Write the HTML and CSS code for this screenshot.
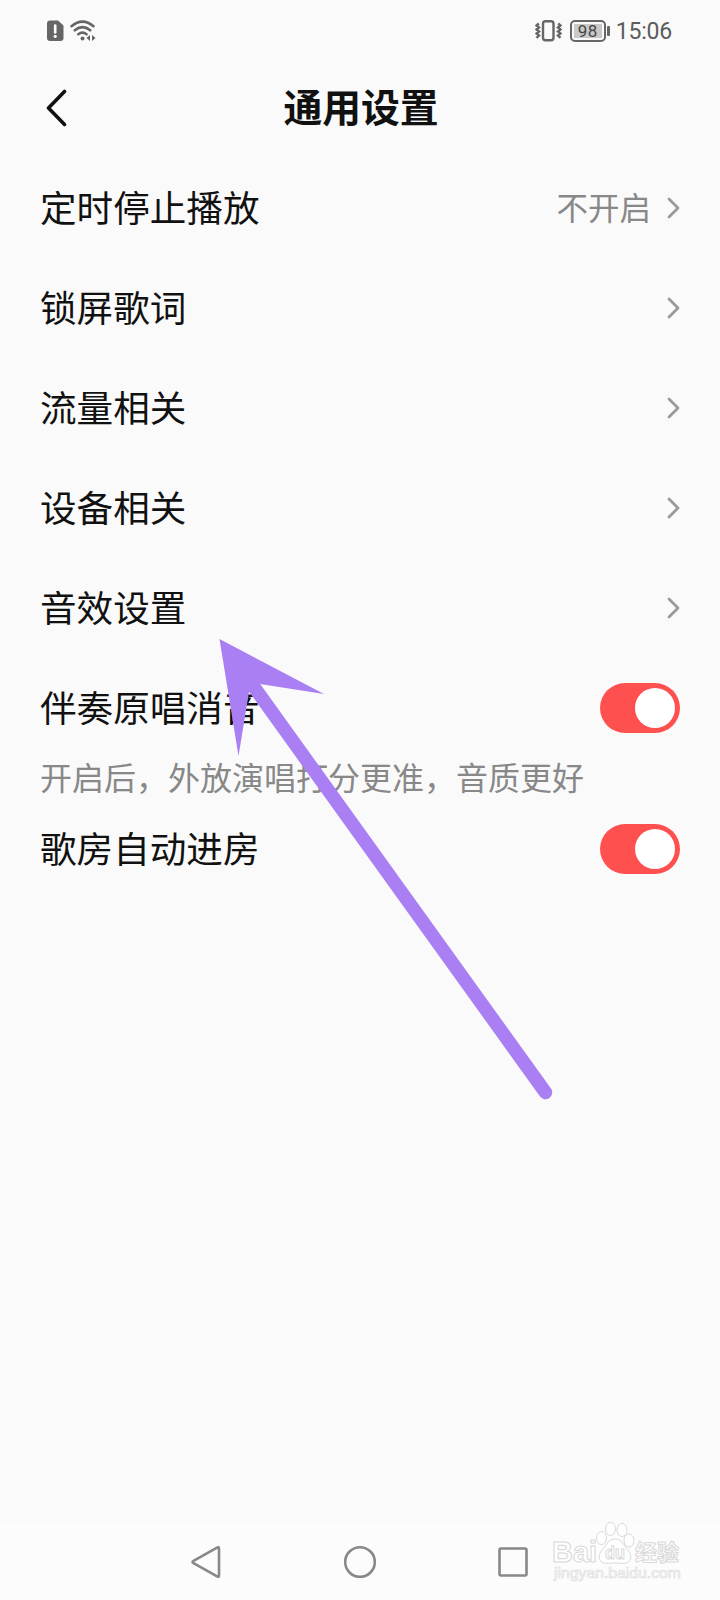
FILE: index.html
```
<!DOCTYPE html>
<html lang="zh-CN">
<head>
    <meta charset="UTF-8">
    <meta name="viewport" content="width=device-width, initial-scale=1.0">
    <title>通用设置</title>
    <link rel="stylesheet" href="styles.css">
</head>
<body>
    <div class="screen">
        <div class="status-bar">
            <div class="status-group">
                <svg width="17" height="22" viewBox="0 0 17 22">
                    <path d="M3 0.5h8l5.500 5v12.500a3 3 0 0 1-3 3H3a3 3 0 0 1-3-3V3.500a3 3 0 0 1 3-3z" fill="#666"/>
                    <path d="M8.200 5.500v7" stroke="#fff" stroke-width="2.600" stroke-linecap="round"/>
                    <circle cx="8.200" cy="16.300" r="1.600" fill="#fff"/>
                </svg>
                <svg class="wifi" width="26" height="22" viewBox="0 0 26 22" fill="none" stroke="#666" stroke-width="2.600" stroke-linecap="round">
                    <path d="M1.500 6.200Q12.500-3 23.500 6.200M4.800 10.300Q12.500 4 20.200 10.300M8.300 14.200Q12.500 11 16.500 14.200"/>
                    <circle cx="12.500" cy="18.500" r="2" fill="#666" stroke="none"/>
                    <path d="M20 15v6l-3.500-3zM22 15v6l3.500-3z" fill="#666" stroke="none"/>
                </svg>
            </div>
            <div class="status-group">
                <svg width="27" height="22" viewBox="0 0 27 22" fill="none" stroke="#666" stroke-width="2.400">
                    <rect x="8" y="1.300" width="10.500" height="19" rx="2.500"/>
                    <path d="M3.800 3.500L1.500 5.500 4 7.500 1.500 9.500 4 11.500 1.500 13.500 4 15.500 1.500 17.800M23.200 3.500L25.500 5.500 23 7.500 25.500 9.500 23 11.500 25.500 13.500 23 15.500 25.500 17.800"/>
                </svg>
                <div class="battery"><span class="battery-level">98</span></div>
                <span class="clock">15:06</span>
            </div>
        </div>

        <div class="header">
            <svg class="back" width="22" height="38" viewBox="0 0 22 38" fill="none" stroke="#111" stroke-width="3.600" stroke-linecap="round" stroke-linejoin="round">
                <path d="M18.500 2.500L2.500 19l16 16.500"/>
            </svg>
            <h1>通用设置</h1>
        </div>

        <div class="list">
            <div class="row">
                <span class="label">定时停止播放</span>
                <span class="value">不开启</span>
                <svg class="chevron" viewBox="0 0 14 22"><path d="M2 2l9 9-9 9"/></svg>
            </div>
            <div class="row">
                <span class="label">锁屏歌词</span>
                <svg class="chevron" viewBox="0 0 14 22"><path d="M2 2l9 9-9 9"/></svg>
            </div>
            <div class="row">
                <span class="label">流量相关</span>
                <svg class="chevron" viewBox="0 0 14 22"><path d="M2 2l9 9-9 9"/></svg>
            </div>
            <div class="row">
                <span class="label">设备相关</span>
                <svg class="chevron" viewBox="0 0 14 22"><path d="M2 2l9 9-9 9"/></svg>
            </div>
            <div class="row">
                <span class="label">音效设置</span>
                <svg class="chevron" viewBox="0 0 14 22"><path d="M2 2l9 9-9 9"/></svg>
            </div>
            <div class="row">
                <span class="label">伴奏原唱消音</span>
                <div class="switch"></div>
            </div>
            <p class="hint">开启后，外放演唱打分更准，音质更好</p>
            <div class="row">
                <span class="label">歌房自动进房</span>
                <div class="switch"></div>
            </div>
        </div>

        <div class="nav-bar">
            <svg width="32" height="34" viewBox="0 0 32 34"><path d="M27.500 2.500Q29 1.500 29 3.500v27q0 2-1.500 1L3.500 18.200q-2-1.200 0-2.400z"/></svg>
            <svg width="34" height="34" viewBox="0 0 34 34"><circle cx="18" cy="17" r="14.800"/></svg>
            <svg width="34" height="34" viewBox="0 0 34 34"><rect x="3.500" y="3.500" width="27" height="27" rx="1.500"/></svg>
        </div>

        <!-- pointer arrow -->
        <svg class="arrow" width="350" height="480" viewBox="0 0 350 480">
            <path d="M9.500 9L114 64 50 54 39 62 28.500 126z"/>
            <path class="shaft" d="M44 57L335.500 462.500"/>
        </svg>

        <svg class="watermark" width="140" height="70" viewBox="0 0 140 70">
            <g class="outline">
                <text x="2" y="42" font-size="29" textLength="45" lengthAdjust="spacingAndGlyphs">Bai</text>
                <ellipse cx="51.500" cy="18" rx="5" ry="6.500"/>
                <ellipse cx="60.500" cy="9" rx="5" ry="6.500"/>
                <ellipse cx="72" cy="10" rx="5" ry="6.500"/>
                <ellipse cx="79" cy="20.500" rx="5" ry="6.500"/>
                <path d="M65 19c5 0 8 4 11 9 4 4 6 8 4 12-3 5-9 3-15 3s-12 2-15-3c-2-4 0-8 4-12 3-5 6-9 11-9z"/>
                <text x="55" y="39" font-size="19" textLength="20" lengthAdjust="spacingAndGlyphs">du</text>
                <text class="cjk" x="85" y="40" font-size="22">经验</text>
            </g>
            <text class="url" x="4" y="58" font-size="14" textLength="127" lengthAdjust="spacingAndGlyphs">jingyan.baidu.com</text>
        </svg>
    </div>
</body>
</html>
```
FILE: styles.css
```
* {
    box-sizing: border-box;
}
body {
    margin: 0;
    background-color: #fafafa;
    font-family: "Noto Sans CJK SC", sans-serif;
    color: #111;
}
.screen {
    position: relative;
    display: flex;
    flex-direction: column;
    width: 720px;
    height: 1600px;
    overflow: hidden;
}
.status-bar {
    display: flex;
    justify-content: space-between;
    align-items: center;
    height: 61px;
    padding: 0 48px 0 47px;
}
.status-group {
    display: flex;
    align-items: center;
}
.wifi {
    margin-left: 6px;
}
.battery {
    position: relative;
    width: 36px;
    height: 22px;
    margin: 0 10px 0 8px;
    padding: 2px;
    border: 2px solid #666;
    border-radius: 5px;
}
/* battery terminal */
.battery::after {
    content: "";
    position: absolute;
    top: 4px;
    right: -6px;
    width: 3px;
    height: 10px;
    border-radius: 1px;
    background-color: #666;
}
.battery-level {
    display: block;
    width: 28px;
    height: 14px;
    background-color: #c9c9c9;
    color: #444;
    font: 17px/14px Roboto, sans-serif;
    letter-spacing: 0.4px;
    text-align: center;
}
.clock {
    font: 23px/28px Roboto, sans-serif;
    letter-spacing: -0.2px;
    padding-top: 2px;
    color: #5c5c5c;
}
.header {
    display: grid;
    grid-template-columns: 121px 1fr 119px;
    align-items: center;
    height: 97px;
    padding-bottom: 3px;
}
.back {
    margin-left: 46px;
}
h1 {
    margin: 0;
    padding-bottom: 6px;
    font-size: 38.8px;
    line-height: 60px;
    font-weight: 700;
    text-align: center;
}
.list {
    flex: 1;
    padding: 0 40px;
}
.row {
    display: flex;
    align-items: center;
    height: 100px;
    font-size: 36.6px;
}
.label {
    padding-bottom: 4px;
}
.value {
    margin-left: auto;
    padding-bottom: 4px;
    font-size: 31.5px;
    color: #888;
}
.chevron {
    width: 14px;
    height: 22px;
    margin-left: auto;
    margin-right: -1px;
    fill: none;
    stroke: #999;
    stroke-width: 2.8;
    stroke-linecap: round;
    stroke-linejoin: round;
}
.value + .chevron {
    margin-left: 16px;
}
.switch {
    display: flex;
    justify-content: flex-end;
    width: 80px;
    height: 50px;
    margin-left: auto;
    padding: 5px;
    border-radius: 25px;
    background-color: #ff5050;
}
.switch::after {
    content: "";
    width: 40px;
    height: 40px;
    border-radius: 50%;
    background-color: #fff;
}
.hint {
    height: 41px;
    margin: 0;
    font-size: 32px;
    line-height: 36px;
    color: #888;
}
.nav-bar {
    display: flex;
    align-items: center;
    justify-content: center;
    gap: 120px;
    height: 77px;
    background-color: #fcfcfc;
}
.nav-bar svg {
    fill: none;
    stroke: #888;
    stroke-width: 2.6;
}
.arrow {
    position: absolute;
    left: 210px;
    top: 630px;
    fill: #a97ff3;
}
.shaft {
    stroke: #a97ff3;
    stroke-width: 13.5;
    stroke-linecap: round;
}
.watermark {
    position: absolute;
    left: 550px;
    top: 1520px;
    font-family: "Liberation Sans", sans-serif;
}
.outline {
    fill: #fff;
    stroke: #d8d8d8;
    stroke-width: 1;
    font-weight: 700;
}
.cjk {
    font-family: "Noto Sans CJK SC", sans-serif;
}
.url {
    fill: #fff;
    stroke: #e0e0e0;
    stroke-width: 0.7;
}
```
